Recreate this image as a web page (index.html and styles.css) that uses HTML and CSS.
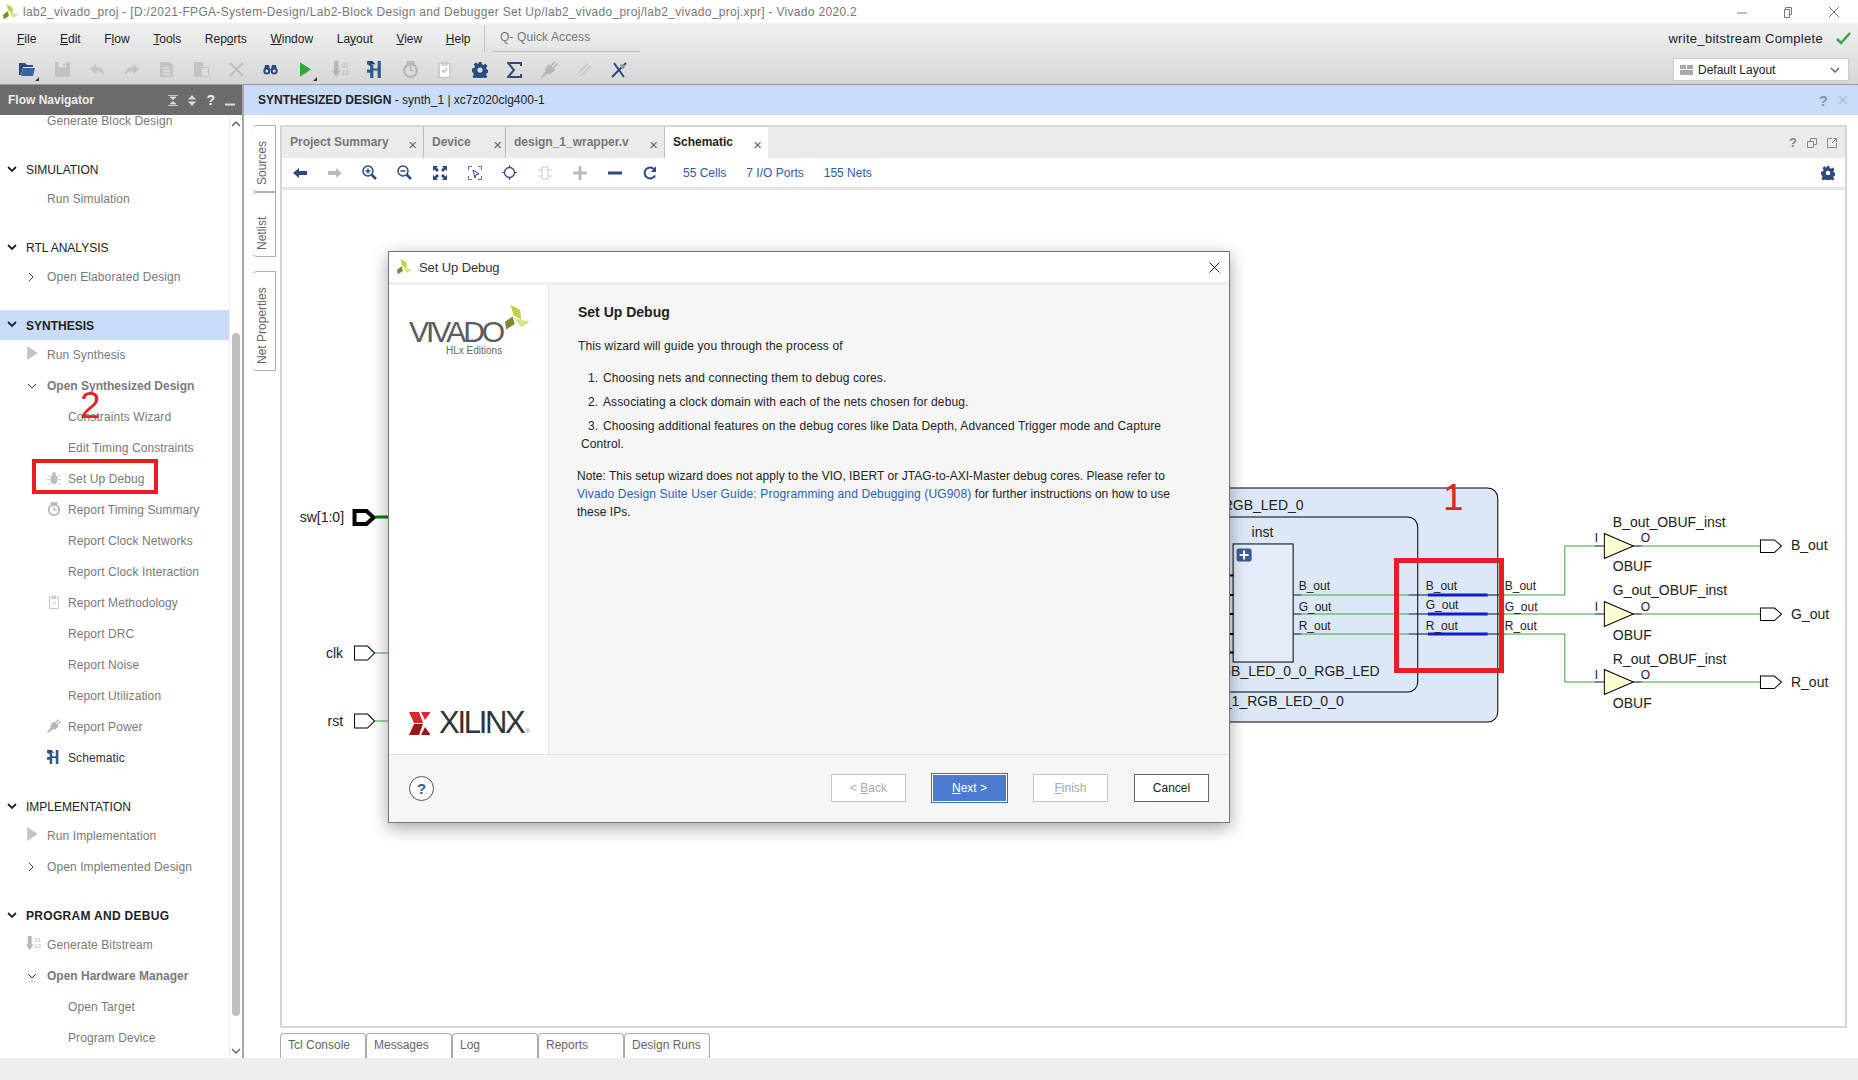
FILE: index.html
```html
<!DOCTYPE html>
<html lang="en">
<head>
  <meta charset="UTF-8" />
  <title>lab2_vivado_proj - Vivado 2020.2</title>
  <link rel="stylesheet" href="styles.css">
</head>
<body>
  <!-- shared icons -->
  <svg class="defs" width="0" height="0">
    <symbol id="i-leaf" viewBox="0 0 24 24">
      <polygon points="5,0 14,5 15,14 8,10" fill="#c3cd4e"/>
      <polygon points="8,12 15,14 23,16 15,21" fill="#dfe388"/>
      <polygon points="0,16 7,11 9,18 1,23" fill="#7d8a2d"/>
    </symbol>
    <symbol id="i-gear" viewBox="0 0 16 16">
      <path fill-rule="evenodd" d="M6.5 0h3l.4 2.3 1.5.7 2-1.3 2 2.2-1.3 2 .6 1.5 2.3.5v3l-2.3.4-.7 1.5 1.3 2-2 2-2-1.3-1.5.6-.4 2.3h-3l-.4-2.3-1.5-.7-2 1.3-2-2 1.3-2-.6-1.5L0 9.6v-3l2.3-.5.7-1.5-1.3-2 2-2.2 2 1.3 1.5-.6zM8 5.5a2.6 2.6 0 100 5.2 2.6 2.6 0 000-5.2z" fill="#2c4a80"/>
    </symbol>
    <symbol id="i-play" viewBox="0 0 12 16"><polygon points="0,0 12,8 0,16"/></symbol>
    <symbol id="i-sch" viewBox="0 0 16 16">
      <path d="M0 0l6 4v3h4V0h3v16h-3V9H6v7H3v-5H0V8h3V5L0 3z" fill="#2c5a8f"/>
      <path d="M0 0h5l3 3H4z" fill="#1f3f70"/>
    </symbol>
    <symbol id="i-clock" viewBox="0 0 16 16">
      <circle cx="8" cy="9" r="6" fill="none" stroke="#b5b5b5" stroke-width="2"/>
      <path d="M5 0h6v2H5zM8 5v4h3" fill="none" stroke="#b5b5b5" stroke-width="1.5"/>
    </symbol>
    <symbol id="i-clip" viewBox="0 0 16 16">
      <path d="M3 2.5h10v13H3zM6 1h4v3H6zM5.500 9l2 2 3-4" fill="#fff" stroke="#bdbdbd"/>
    </symbol>
    <symbol id="i-plug" viewBox="0 0 16 16">
      <path d="M13 0l-4 4-2-1-3 4v3l-4 5 1 1 5-4h3l4-3-1-2 4-4-1-1-4 4-1-1 4-4z" fill="#b5b5b5"/>
    </symbol>
    <symbol id="i-bug" viewBox="0 0 16 16">
      <ellipse cx="8" cy="9.500" rx="4" ry="5.500" fill="#bbb"/>
      <circle cx="8" cy="3" r="2" fill="#bbb"/>
      <path d="M1 4l3 3M15 4l-3 3M0 10h4M16 10h-4M1 16l3-3M15 16l-3-3" stroke="#bbb" fill="none"/>
    </symbol>
  </svg>

  <div class="titlebar">
    <svg class="title-leaf"><use href="#i-leaf"/></svg>
    <span class="title-text">lab2_vivado_proj - [D:/2021-FPGA-System-Design/Lab2-Block Design and Debugger Set Up/lab2_vivado_proj/lab2_vivado_proj.xpr] - Vivado 2020.2</span>
    <div class="win-btns">
      <svg width="12" height="12" viewBox="0 0 12 12"><path d="M1 7h10" stroke="#777"/></svg>
      <svg width="12" height="12" viewBox="0 0 12 12"><path d="M3.500 3.500v-2h6v7h-2M2.500 3.500h5v8h-5z" fill="none" stroke="#777"/></svg>
      <svg width="12" height="12" viewBox="0 0 12 12"><path d="M1 1l10 10M11 1L1 11" stroke="#777"/></svg>
    </div>
  </div>

  <div class="top">
    <div class="menubar">
      <span><u>F</u>ile</span>
      <span><u>E</u>dit</span>
      <span>F<u>l</u>ow</span>
      <span><u>T</u>ools</span>
      <span>Rep<u>o</u>rts</span>
      <span><u>W</u>indow</span>
      <span>La<u>y</u>out</span>
      <span><u>V</u>iew</span>
      <span><u>H</u>elp</span>
      <div class="quick">Q- Quick Access</div>
      <div class="complete">
        <span>write_bitstream Complete</span>
        <svg width="15" height="13" viewBox="0 0 15 13"><path d="M1 7l4 4 9-10" fill="none" stroke="#3aa648" stroke-width="2.500"/></svg>
      </div>
    </div>
    <div class="toolbar">
      <i class="tool more"><svg width="18" height="15" viewBox="0 0 18 15"><path d="M1 1h6l2 2h6v2H5l-2 8H1z" fill="#2c4a80"/><path d="M5 6h12l-2 8H3z" fill="#3c639c"/></svg></i>
      <i class="tool"><svg width="15" height="15" viewBox="0 0 15 15"><path d="M0 0h15v15H0z" fill="#c2c2c2"/><path d="M4 0h7v5H4z" fill="#e4e4e4"/><path d="M8 1h2v3H8z" fill="#c2c2c2"/></svg></i>
      <i class="tool"><svg width="14" height="11" viewBox="0 0 14 11"><path d="M6 0L0 5l6 5V7c3 0 6 1 8 4 0-5-3-8-8-8z" fill="#c4c4c4"/></svg></i>
      <i class="tool"><svg width="14" height="11" viewBox="0 0 14 11"><path d="M8 0l6 5-6 5V7c-3 0-6 1-8 4 0-5 3-8 8-8z" fill="#c4c4c4"/></svg></i>
      <i class="tool"><svg width="13" height="15" viewBox="0 0 13 15"><path d="M0 0h9l4 3v12H0z" fill="#c4c4c4"/><path d="M3 6h7M3 9h7M3 12h7" stroke="#eee"/></svg></i>
      <i class="tool"><svg width="15" height="15" viewBox="0 0 15 15"><path d="M0 0h9v15H0z" fill="#c4c4c4"/><path d="M7.500 5.500h7v9h-7z" fill="#dedede" stroke="#c4c4c4"/></svg></i>
      <i class="tool"><svg width="15" height="15" viewBox="0 0 15 15"><path d="M1 1l13 13M14 1L1 14" stroke="#bdbdbd" stroke-width="2"/></svg></i>
      <i class="tool"><svg width="15" height="11" viewBox="0 0 15 11"><circle cx="3.800" cy="7" r="3.500" fill="#2c4a80"/><circle cx="11.200" cy="7" r="3.500" fill="#2c4a80"/><path d="M2 1h4l1 4h1l1-4h4l1 5H1z" fill="#2c4a80"/><circle cx="3.800" cy="7" r="1.500" fill="#ddd"/><circle cx="11.200" cy="7" r="1.500" fill="#ddd"/></svg></i>
      <i class="tool more"><svg class="play-run" width="11" height="15"><use href="#i-play"/></svg></i>
      <i class="tool"><svg width="17" height="17" viewBox="0 0 16 16"><path d="M2 0h4v9h2l-4 6-4-6h2z" fill="#b5b5b5"/><text x="9" y="6.500" font-size="6" fill="#b5b5b5">01</text><text x="9" y="13" font-size="6" fill="#b5b5b5">10</text></svg></i>
      <i class="tool"><svg width="17" height="17"><use href="#i-sch"/></svg></i>
      <i class="tool"><svg width="17" height="17"><use href="#i-clock"/></svg></i>
      <i class="tool"><svg width="17" height="17"><use href="#i-clip"/></svg></i>
      <i class="tool"><svg width="16" height="16"><use href="#i-gear"/></svg></i>
      <i class="tool"><svg width="15" height="16" viewBox="0 0 15 16"><path d="M14 4V1H1l6 7-6 7h13v-3M3 14" fill="none" stroke="#2c4a80" stroke-width="2"/></svg></i>
      <i class="tool"><svg width="17" height="17"><use href="#i-plug"/></svg></i>
      <i class="tool"><svg width="16" height="16" viewBox="0 0 16 16"><path d="M11 1l4 4-9 9-5 1 1-5z" fill="#ccc"/><path d="M1 15L15 1" stroke="#eee"/></svg></i>
      <i class="tool"><svg width="16" height="16" viewBox="0 0 16 16"><path d="M3 1l10 14M15 1L1 15" stroke="#2c4a80" stroke-width="2"/><path d="M9 2l5 1-1 4-3-1z" fill="#8a97ad"/></svg></i>
      <div class="layout-box">
        <svg width="13" height="10" viewBox="0 0 13 10"><path d="M0 0h6v4H0zM7 0h6v4H7zM0 5h13v5H0z" fill="#aaa"/></svg>
        <span>Default Layout</span>
        <svg class="layout-caret" width="10" height="6" viewBox="0 0 10 6"><path d="M1 1l4 4 4-4" fill="none" stroke="#666" stroke-width="1.500"/></svg>
      </div>
    </div>
  </div>

  <div class="main">
    <div class="nav">
      <div class="nav-title">
        <b>Flow Navigator</b>
        <span class="nav-title-icons">
          <svg width="10" height="11" viewBox="0 0 10 11"><path d="M0 .5h10M0 10.500h10M2 2l3 2.500L8 2zM2 9l3-2.500L8 9z" stroke="#ddd" fill="#ddd" stroke-width=".8"/></svg>
          <svg width="8" height="11" viewBox="0 0 8 11"><path d="M0 4.500L4 0l4 4.500zM0 6.500L4 11l4-4.500z" fill="#ddd"/></svg>
          <em>?</em>
          <svg width="10" height="11" viewBox="0 0 10 11"><path d="M0 9.500h10" stroke="#ddd" stroke-width="2"/></svg>
        </span>
      </div>
      <div class="nav-body">
        <div class="nav-list">
          <div class="nav-group first">
            <div class="item l1">Generate Block Design</div>
          </div>
          <div class="nav-group">
            <div class="head"><svg class="chev"><path d="M1 1l4 4 4-4"/></svg>SIMULATION</div>
            <div class="item l1">Run Simulation</div>
          </div>
          <div class="nav-group">
            <div class="head"><svg class="chev"><path d="M1 1l4 4 4-4"/></svg>RTL ANALYSIS</div>
            <div class="item l1"><svg class="chev thin side"><path d="M2 0l4 4-4 4"/></svg>Open Elaborated Design</div>
          </div>
          <div class="nav-group">
            <div class="head active"><svg class="chev"><path d="M1 1l4 4 4-4"/></svg><b>SYNTHESIS</b></div>
            <div class="item l1"><svg class="play"><use href="#i-play"/></svg>Run Synthesis</div>
            <div class="item l1 strong"><svg class="chev thin side"><path d="M1 2l4 4 4-4"/></svg>Open Synthesized Design</div>
            <div class="item l2">Constraints Wizard</div>
            <div class="item l2">Edit Timing Constraints</div>
            <div class="item l2"><svg class="ico"><use href="#i-bug"/></svg>Set Up Debug</div>
            <div class="item l2"><svg class="ico"><use href="#i-clock"/></svg>Report Timing Summary</div>
            <div class="item l2">Report Clock Networks</div>
            <div class="item l2">Report Clock Interaction</div>
            <div class="item l2"><svg class="ico"><use href="#i-clip"/></svg>Report Methodology</div>
            <div class="item l2">Report DRC</div>
            <div class="item l2">Report Noise</div>
            <div class="item l2">Report Utilization</div>
            <div class="item l2"><svg class="ico"><use href="#i-plug"/></svg>Report Power</div>
            <div class="item l2 on"><svg class="ico"><use href="#i-sch"/></svg>Schematic</div>
          </div>
          <div class="nav-group">
            <div class="head"><svg class="chev"><path d="M1 1l4 4 4-4"/></svg>IMPLEMENTATION</div>
            <div class="item l1"><svg class="play"><use href="#i-play"/></svg>Run Implementation</div>
            <div class="item l1"><svg class="chev thin side"><path d="M2 0l4 4-4 4"/></svg>Open Implemented Design</div>
          </div>
          <div class="nav-group">
            <div class="head"><svg class="chev"><path d="M1 1l4 4 4-4"/></svg><b class="med">PROGRAM AND DEBUG</b></div>
            <div class="item l1"><svg class="bits" viewBox="0 0 16 16"><path d="M2 0h4v9h2l-4 6-4-6h2z" fill="#b5b5b5"/><text x="9" y="6.500" font-size="6" fill="#b5b5b5">01</text><text x="9" y="13" font-size="6" fill="#b5b5b5">10</text></svg>Generate Bitstream</div>
            <div class="item l1 strong"><svg class="chev thin side"><path d="M1 2l4 4 4-4"/></svg>Open Hardware Manager</div>
            <div class="item l2">Open Target</div>
            <div class="item l2">Program Device</div>
          </div>
        </div>
        <div class="scrollbar">
          <svg width="10" height="7" viewBox="0 0 10 7"><path d="M1 6l4-4 4 4" fill="none" stroke="#666" stroke-width="1.500"/></svg>
          <div class="thumb"></div>
          <svg width="10" height="7" viewBox="0 0 10 7"><path d="M1 1l4 4 4-4" fill="none" stroke="#666" stroke-width="1.500"/></svg>
        </div>
      </div>
    </div>

    <div class="content">
      <div class="banner">
        <span><b>SYNTHESIZED DESIGN</b> - synth_1 | xc7z020clg400-1</span>
        <span class="banner-btns"><em>?</em><svg width="10" height="10" viewBox="0 0 10 10"><path d="M1 1l8 8M9 1L1 9" stroke="#b4bdc9" stroke-width="1.500"/></svg></span>
      </div>
      <div class="workspace">
        <div class="vtabs">
          <div class="vtab t-sources">Sources</div>
          <div class="vtab t-netlist">Netlist</div>
          <div class="vtab t-props">Net Properties</div>
        </div>
        <div class="center">
          <div class="panel">
            <div class="tabs">
              <div class="tab w1"><span>Project Summary</span><small>×</small></div>
              <div class="tab w2"><span>Device</span><small>×</small></div>
              <div class="tab w3"><span>design_1_wrapper.v</span><small>×</small></div>
              <div class="tab w4 current"><span>Schematic</span><small>×</small></div>
              <div class="tabs-right">
                <em>?</em>
                <svg width="10" height="10" viewBox="0 0 10 10"><path d="M3.500 3V.5h6v6H7M.5 3.500h6v6h-6z" fill="none" stroke="#888"/></svg>
                <svg width="10" height="10" viewBox="0 0 10 10"><path d="M5 .5H.5v9h9V5M5 5l4-4M6 .5h3.500V4" fill="none" stroke="#888"/></svg>
              </div>
            </div>
            <div class="ptools">
              <i class="ptool"><svg width="14" height="10" viewBox="0 0 14 10"><path d="M0 5l6-5v3h8v4H6v3z" fill="#2c4a80"/></svg></i>
              <i class="ptool"><svg width="14" height="10" viewBox="0 0 14 10"><path d="M14 5L8 0v3H0v4h8v3z" fill="#bdbdbd"/></svg></i>
              <i class="ptool"><svg width="15" height="15" viewBox="0 0 15 15"><circle cx="6" cy="6" r="5" fill="none" stroke="#2c4a80" stroke-width="1.500"/><path d="M9.500 9.500L14 14" stroke="#2c4a80" stroke-width="2.500"/><path d="M3.500 6h5M6 3.500v5" stroke="#2c4a80" stroke-width="1.500"/></svg></i>
              <i class="ptool"><svg width="15" height="15" viewBox="0 0 15 15"><circle cx="6" cy="6" r="5" fill="none" stroke="#2c4a80" stroke-width="1.500"/><path d="M9.500 9.500L14 14" stroke="#2c4a80" stroke-width="2.500"/><path d="M3.500 6h5" stroke="#2c4a80" stroke-width="1.500"/></svg></i>
              <i class="ptool"><svg width="14" height="14" viewBox="0 0 14 14"><path d="M0 0h5L3.500 1.500 6 4 4 6 1.500 3.500 0 5zM14 0v5l-1.500-1.500L10 6 8 4l2.500-2.500L9 0zM0 14V9l1.500 1.500L4 8l2 2-2.500 2.500L5 14zM14 14H9l1.500-1.500L8 10l2-2 2.500 2.500L14 9z" fill="#2c4a80"/></svg></i>
              <i class="ptool"><svg width="14" height="14" viewBox="0 0 14 14"><path d="M.5 4V.5H4M10 .5h3.500V4M13.500 10v3.500H10M4 13.500H.5V10" fill="none" stroke="#5c6f91"/><path d="M5 4l6 4-3 .5L7 12z" fill="#fff" stroke="#2c4a80"/></svg></i>
              <i class="ptool"><svg width="15" height="15" viewBox="0 0 15 15"><circle cx="7.500" cy="7.500" r="5" fill="none" stroke="#2c4a80" stroke-width="1.300"/><path d="M7.500 0v3M7.500 12v3M0 7.500h3M12 7.500h3" stroke="#2c4a80"/></svg></i>
              <i class="ptool"><svg width="14" height="14" viewBox="0 0 14 14"><path d="M4 1h6v12H4zM0 4h4M0 10h4M10 4h4M10 10h4" fill="none" stroke="#ccc"/></svg></i>
              <i class="ptool"><svg width="14" height="14" viewBox="0 0 14 14"><path d="M7 0v14M0 7h14" stroke="#bdbdbd" stroke-width="3"/></svg></i>
              <i class="ptool"><svg width="14" height="14" viewBox="0 0 14 14"><path d="M0 7h14" stroke="#2c4a80" stroke-width="3"/></svg></i>
              <i class="ptool"><svg width="14" height="14" viewBox="0 0 14 14"><path d="M12 9.500A5.500 5.500 0 1111 3" fill="none" stroke="#2c4a80" stroke-width="2"/><path d="M13 0v6H8z" fill="#2c4a80"/></svg></i>
              <a class="count c1">55 Cells</a>
              <a class="count c2">7 I/O Ports</a>
              <a class="count c3">155 Nets</a>
              <svg class="ptools-gear" width="14" height="14"><use href="#i-gear"/></svg>
            </div>
            <div class="canvas">
              <svg class="sch" viewBox="283 192 1562 833">
                <g class="lab">
                  <text x="345" y="523" text-anchor="end">sw[1:0]</text>
                  <text x="344" y="658" text-anchor="end">clk</text>
                  <text x="344" y="726" text-anchor="end">rst</text>
                </g>
                <path d="M355.500 511.500h12l7 6.500-7 6.500h-12z" fill="#fff" stroke="#000" stroke-width="4"/>
                <path d="M376 517.500h32" stroke="#0b7a0b" stroke-width="3"/>
                <path d="M355.500 646.500h13l7 7-7 7h-13zM355.500 714.500h13l7 7-7 7h-13z" fill="#fff" stroke="#000"/>
                <path d="M376 653.500h32M376 721.500h32" stroke="#3aa63a"/>

                <path d="M1100 488.500h388a10 10 0 0 1 10 10v214a10 10 0 0 1-10 10h-388z" fill="#dce8f8" stroke="#000"/>
                <path d="M1100 517.500h308a10 10 0 0 1 10 10v155a10 10 0 0 1-10 10h-308z" fill="#dce8f8" stroke="#000"/>
                <rect x="1233.500" y="544.500" width="60" height="118" fill="#e3edf9" stroke="#000"/>
                <rect x="1237" y="549" width="15" height="13" rx="2" fill="#3c5a92"/>
                <path d="M1244.500 551v9M1240 555.500h9" stroke="#fff" stroke-width="2"/>
                <path d="M1229 576h5M1229 595.500h5M1229 614.500h5M1229 634.500h5M1229 653h5" stroke="#000" stroke-width="2"/>
                <g class="lab">
                  <text x="1304" y="511" text-anchor="end">RGB_LED_0</text>
                  <text x="1252" y="538">inst</text>
                  <text x="1380" y="676" text-anchor="end">RGB_LED_0_0_RGB_LED</text>
                  <text x="1344" y="706" text-anchor="end">design_1_RGB_LED_0_0</text>
                </g>

                <path d="M1302 595.500h107M1505 595.500h60v-49h30M1302 614.500h107M1505 614.500h90M1302 634.500h107M1505 634.500h60v48h30" fill="none" stroke="#3aa63a"/>
                <path d="M1294 595.500h8M1409 595.500h19M1488 595.500h17M1294 614.500h8M1409 614.500h19M1488 614.500h17M1294 634.500h8M1409 634.500h19M1488 634.500h17" stroke="#111"/>
                <path d="M1428 595.500h60M1428 614.500h60M1428 634.500h60" stroke="#0c1fc8" stroke-width="3"/>
                <g class="lab sm">
                  <text x="1299" y="591">B_out</text><text x="1299" y="611">G_out</text><text x="1299" y="630">R_out</text>
                  <text x="1426" y="591">B_out</text><text x="1426" y="610">G_out</text><text x="1426" y="630">R_out</text>
                  <text x="1505" y="591">B_out</text><text x="1505" y="611">G_out</text><text x="1505" y="630">R_out</text>
                </g>

                <g>
                  <path d="M1595 546.500h9M1633 546.500h9" stroke="#111"/>
                  <path d="M1642 546.500h118" stroke="#3aa63a"/>
                  <path d="M1604.500 534l29 12.500-29 12.500z" fill="#fefdd2" stroke="#000"/>
                  <path d="M1760.500 540.500h14l7 6-7 6.500h-14z" fill="#fff" stroke="#000"/>
                </g>
                <g transform="translate(0 68)">
                  <path d="M1595 546.500h9M1633 546.500h9" stroke="#111"/>
                  <path d="M1642 546.500h118" stroke="#3aa63a"/>
                  <path d="M1604.500 534l29 12.500-29 12.500z" fill="#fefdd2" stroke="#000"/>
                  <path d="M1760.500 540.500h14l7 6-7 6.500h-14z" fill="#fff" stroke="#000"/>
                </g>
                <g transform="translate(0 136)">
                  <path d="M1595 546.500h9M1633 546.500h9" stroke="#111"/>
                  <path d="M1642 546.500h118" stroke="#3aa63a"/>
                  <path d="M1604.500 534l29 12.500-29 12.500z" fill="#fefdd2" stroke="#000"/>
                  <path d="M1760.500 540.500h14l7 6-7 6.500h-14z" fill="#fff" stroke="#000"/>
                </g>
                <g class="lab">
                  <text x="1613" y="528">B_out_OBUF_inst</text><text x="1595" y="543" class="pin">I</text><text x="1641" y="543" class="pin">O</text><text x="1613" y="572">OBUF</text><text x="1791" y="551">B_out</text>
                  <text x="1613" y="596">G_out_OBUF_inst</text><text x="1595" y="611" class="pin">I</text><text x="1641" y="611" class="pin">O</text><text x="1613" y="640">OBUF</text><text x="1791" y="619">G_out</text>
                  <text x="1613" y="664">R_out_OBUF_inst</text><text x="1595" y="679" class="pin">I</text><text x="1641" y="679" class="pin">O</text><text x="1613" y="708">OBUF</text><text x="1791" y="687">R_out</text>
                </g>
              </svg>
            </div>
          </div>
          <div class="bottom-tabs">
            <div class="btab b1">Tcl Console</div>
            <div class="btab b2">Messages</div>
            <div class="btab b3">Log</div>
            <div class="btab b4">Reports</div>
            <div class="btab b5">Design Runs</div>
          </div>
        </div>
      </div>
    </div>
  </div>
  <div class="statusbar"></div>

  <!-- wizard on top of the schematic -->
  <div class="dialog">
    <div class="dlg-title">
      <svg width="16" height="16"><use href="#i-leaf"/></svg>
      <span>Set Up Debug</span>
      <svg class="dlg-close" width="11" height="11" viewBox="0 0 11 11"><path d="M.5.5l10 10M10.500.5l-10 10" stroke="#222"/></svg>
    </div>
    <div class="dlg-body">
      <div class="dlg-side">
        <div class="vivado">
          <div class="vivado-word"><span>VIVADO</span><svg width="26" height="27"><use href="#i-leaf"/></svg></div>
          <div class="vivado-sub">HLx Editions</div>
        </div>
        <div class="xilinx">
          <svg width="21" height="23" viewBox="0 0 21 23">
            <path d="M0 0h10l4 11H5z" fill="#d8262c"/><path d="M5 12h9L10 23H0z" fill="#96191c"/>
            <path d="M12 0h9v1l-5 7z" fill="#d8262c"/><path d="M16 15l5 7v1h-9z" fill="#96191c"/>
          </svg>
          <span>XILINX<sup>®</sup></span>
        </div>
      </div>
      <div class="dlg-main">
        <h2>Set Up Debug</h2>
        <p class="intro">This wizard will guide you through the process of</p>
        <p class="step"><span>1.</span>Choosing nets and connecting them to debug cores.</p>
        <p class="step"><span>2.</span>Associating a clock domain with each of the nets chosen for debug.</p>
        <p class="step"><span>3.</span>Choosing additional features on the debug cores like Data Depth, Advanced Trigger mode and Capture Control.</p>
        <p class="note">Note: This setup wizard does not apply to the VIO, IBERT or JTAG-to-AXI-Master debug cores. Please refer to <a>Vivado Design Suite User Guide: Programming and Debugging (UG908)</a> for further instructions on how to use these IPs.</p>
      </div>
    </div>
    <div class="dlg-foot">
      <div class="help">?</div>
      <div class="btn off"><span>&lt; <u>B</u>ack</span></div>
      <div class="btn next"><span><u>N</u>ext &gt;</span></div>
      <div class="btn off"><span><u>F</u>inish</span></div>
      <div class="btn cancel">Cancel</div>
    </div>
  </div>

  <!-- hand drawn annotations from the screenshot author -->
  <div class="mark mark-debug"></div>
  <div class="mark mark-ports"></div>
  <span class="num num-1">1</span>
  <span class="num num-2">2</span>
</body>
</html>
```

FILE: styles.css
```css
* {
  margin: 0;
  padding: 0;
  box-sizing: border-box;
}

html, body {
  width: 1858px;
  height: 1080px;
  overflow: hidden;
}

body {
  position: relative;
  font: 12px 'Liberation Sans', Arial, sans-serif;
  color: #222;
  background: #fff;
  display: flex;
  flex-direction: column;
}

.defs {
  position: absolute;
}

em {
  font-style: normal;
  font-weight: 700;
}

/* title bar */
.titlebar {
  height: 23px;
  display: flex;
  align-items: center;
  padding-left: 3px;
  color: #777;
}

.title-text {
  letter-spacing: .31px;
}

.title-leaf {
  width: 16px;
  height: 16px;
  margin-right: 4px;
}

.win-btns {
  margin-left: auto;
  display: flex;
  gap: 34px;
  padding-right: 18px;
}

/* menu + main toolbar */
.top {
  height: 62px;
  background: linear-gradient(#f1f1f1, #d6d6d6);
  border-bottom: 1px solid #9a9a9a;
}

.menubar {
  height: 31px;
  display: flex;
  align-items: center;
  gap: 23.6px;
  padding: 0 7px 0 17px;
  color: #222;
}

.quick {
  width: 147px;
  height: 27px;
  padding: 4px 0 0 7px;
  border-bottom: 1px solid #bbb;
  color: #777;
  line-height: 17px;
  letter-spacing: .1px;
  position: relative;
  left: -1px;
}

.quick::before {
  content: "";
  position: absolute;
  left: -9px;
  top: 0;
  height: 27px;
  border-left: 1px solid #c4c4c4;
}

.complete {
  margin-left: auto;
  display: flex;
  align-items: center;
  gap: 13px;
  font-size: 13px;
  letter-spacing: .3px;
}

.toolbar {
  height: 30px;
  display: flex;
  align-items: center;
  padding: 1px 9px 0 10px;
}

.tool {
  width: 34.8px;
  height: 24px;
  display: flex;
  align-items: center;
  justify-content: center;
  position: relative;
}

/* little drop-down corner */
.tool.more::after {
  content: "";
  position: absolute;
  right: 6px;
  bottom: 1px;
  border-left: 4px solid transparent;
  border-bottom: 4px solid #333;
}

.play-run {
  fill: #2ea836;
}

.layout-box {
  margin-left: auto;
  width: 176px;
  height: 23px;
  background: #fff;
  border: 1px solid #ccc;
  display: flex;
  align-items: center;
  gap: 5px;
  padding: 0 8px 0 6px;
}

.layout-caret {
  margin-left: auto;
}

/* main area */
.main {
  flex: 1;
  display: flex;
  min-height: 0;
}

.nav {
  width: 244px;
  display: flex;
  flex-direction: column;
  border-right: 2px solid #a8a8a8;
}

.nav-title {
  height: 30px;
  flex: none;
  background: #6b6b6b;
  color: #eee;
  display: flex;
  align-items: center;
  justify-content: space-between;
  padding: 0 7px 0 8px;
}

.nav-title-icons {
  display: flex;
  align-items: center;
  gap: 10px;
  font-size: 14px;
}

.nav-body {
  flex: 1;
  display: flex;
  min-height: 0;
}

.nav-list {
  width: 229px;
  overflow: hidden;
}

.nav-group {
  margin-top: 20px;
}

.nav-group.first {
  margin-top: -9.5px;
}

.head {
  height: 27px;
  display: flex;
  align-items: center;
  padding-left: 26px;
  position: relative;
  color: #222;
}

.head.active {
  background: #c9dcfa;
  height: 30px;
  margin: -3px 0 -0.5px;
  padding-top: 3px;
}

.head .med {
  letter-spacing: .3px;
}

.chev {
  position: absolute;
  left: 7px;
  top: 50%;
  width: 10px;
  height: 7px;
  margin-top: -4px;
  fill: none;
  stroke: #222;
  stroke-width: 1.8;
}

.chev.thin {
  stroke-width: 1;
  stroke: #333;
  height: 8px;
}

.chev.side {
  left: 27px;
}

.item {
  height: 31px;
  display: flex;
  align-items: center;
  position: relative;
  color: #7a7a7a;
  letter-spacing: .1px;
}

.item.l1 {
  padding-left: 47px;
}

.item.l2 {
  padding-left: 68px;
}

.item.strong {
  font-weight: 700;
  letter-spacing: 0;
}

.item.on {
  color: #333;
}

.play {
  position: absolute;
  left: 27px;
  top: 7px;
  width: 11px;
  height: 14px;
  fill: #c4c4c4;
}

.bits {
  position: absolute;
  left: 26px;
  top: 7px;
  width: 15px;
  height: 15px;
}

.ico {
  position: absolute;
  left: 47px;
  top: 8px;
  width: 14px;
  height: 14px;
}

.scrollbar {
  flex: 1;
  display: flex;
  flex-direction: column;
  align-items: center;
  padding: 5px 0 3px;
  border-left: 1px solid #eee;
}

.thumb {
  width: 8px;
  flex: 1;
  margin: 206px 0 32px;
  background: #bfbfbf;
  border-radius: 4px;
}

.content {
  flex: 1;
  display: flex;
  flex-direction: column;
  min-width: 0;
}

.banner {
  height: 30px;
  flex: none;
  background: #c9dcfa;
  display: flex;
  align-items: center;
  justify-content: space-between;
  padding: 0 10px 0 14px;
}

.banner-btns {
  display: flex;
  align-items: center;
  gap: 10px;
  font-size: 15px;
  color: #8793a3;
}

.workspace {
  flex: 1;
  display: flex;
  min-height: 0;
  padding: 10px 11px 0 8px;
}

/* rotated side tabs */
.vtabs {
  width: 24px;
  margin-right: 4px;
  flex: none;
}

.vtab {
  writing-mode: vertical-rl;
  transform: rotate(180deg);
  display: flex;
  align-items: center;
  justify-content: flex-start;
  padding: 6px 0 0 3px;
  border: 1px solid #b0b0b0;
  border-right: none;
  border-radius: 0 5px 5px 0;
  color: #666;
  width: 24px;
}

.t-sources { height: 67px; }
.t-netlist { height: 65px; }
.t-props { height: 100px; margin-top: 14px; }

.center {
  flex: 1;
  display: flex;
  flex-direction: column;
  min-width: 0;
}

.panel {
  flex: 1;
  display: flex;
  flex-direction: column;
  min-height: 0;
  border: 2px solid #d6d6d6;
}

.tabs {
  height: 31px;
  flex: none;
  background: #ebebeb;
  display: flex;
}

.tab {
  display: flex;
  align-items: center;
  justify-content: space-between;
  padding: 0 6px 2px 8px;
  color: #777;
  font-weight: 700;
  border-right: 1px solid #bbb;
}

.tab small {
  font-size: 15px;
  font-weight: 400;
  padding-top: 5px;
  color: #666;
}

.w1 { width: 142px; }
.w2 { width: 82px; padding-right: 3px; }
.w3 { width: 159px; }
.w4 { width: 103px; }

.tab.current {
  background: #fff;
  color: #222;
  border-right: none;
}

.tabs-right {
  margin-left: auto;
  display: flex;
  align-items: center;
  gap: 10px;
  padding-right: 8px;
  color: #888;
  font-size: 13px;
}

.ptools {
  height: 32px;
  flex: none;
  display: flex;
  align-items: center;
  padding: 0 10px 0 0;
  border-bottom: 3px solid #e6e6e6;
}

.ptool {
  width: 35px;
  height: 20px;
  display: flex;
  align-items: center;
  justify-content: center;
}

.count {
  color: #2b5cab;
}

.c1 { margin-left: 16px; }
.c2 { margin-left: 20px; }
.c3 { margin-left: 20px; }

.ptools-gear {
  margin-left: auto;
}

.canvas {
  flex: 1;
  min-height: 0;
  background: #fff;
}

.sch {
  display: block;
  width: 100%;
  height: 100%;
}

.lab text {
  font: 14px 'Liberation Sans', Arial, sans-serif;
  fill: #222;
}

.lab.sm text {
  font-size: 12px;
}

.lab text.pin {
  font-size: 12px;
}

.bottom-tabs {
  height: 30px;
  flex: none;
  display: flex;
  padding-top: 5px;
}

.btab {
  width: 86px;
  border: 1px solid #aaa;
  border-bottom: none;
  border-radius: 4px 4px 0 0;
  padding: 4px 0 0 7px;
  color: #666;
}

.statusbar {
  height: 22px;
  flex: none;
  background: #eee;
}

/* wizard dialog */
.dialog {
  position: absolute;
  left: 388px;
  top: 251px;
  width: 842px;
  height: 572px;
  background: #f6f6f6;
  border: 1px solid #777;
  box-shadow: 0 5px 16px rgba(0, 0, 0, .35);
  display: flex;
  flex-direction: column;
}

.dlg-title {
  height: 33px;
  flex: none;
  background: #fff;
  display: flex;
  align-items: center;
  gap: 6px;
  padding: 0 9px 0 8px;
  font-size: 13px;
  letter-spacing: -.1px;
  color: #333;
  border-bottom: 3px solid #eee;
}

.dlg-close {
  margin-left: auto;
}

.dlg-body {
  flex: 1;
  display: flex;
  min-height: 0;
  border-bottom: 1px solid #e4e4e4;
}

.dlg-side {
  width: 160px;
  flex: none;
  background: #fff;
  border-right: 1px solid #e8e8e8;
  display: flex;
  flex-direction: column;
  justify-content: space-between;
  padding: 20px 0 18px 20px;
}

.vivado-word {
  display: flex;
  align-items: flex-start;
  font-size: 30px;
  line-height: 34px;
  letter-spacing: -3px;
  color: #5a5b5d;
  height: 34px;
  padding-top: 10px;
}

.vivado-word svg {
  margin: -11px 0 0 3px;
  flex: none;
}

.vivado-sub {
  margin: 6px 0 0 37px;
  font-size: 10px;
  color: #666;
}

.xilinx {
  display: flex;
  align-items: center;
  gap: 9px;
}

.xilinx span {
  font-size: 31px;
  line-height: 26px;
  letter-spacing: -2.3px;
  color: #333;
}

.xilinx sup {
  font-size: 6px;
  line-height: 0;
  letter-spacing: 0;
  color: #777;
  vertical-align: baseline;
  margin-left: 2px;
}

.dlg-main {
  flex: 1;
  padding: 19px 0 0 29px;
  color: #222;
}

.dlg-main h2 {
  font-size: 14px;
  line-height: 17px;
  margin-bottom: 16px;
}

.intro {
  line-height: 18px;
  margin-bottom: 14px;
  letter-spacing: .12px;
}

.step {
  width: 620px;
  line-height: 18px;
  margin-bottom: 6px;
  padding-left: 3px;
  letter-spacing: .12px;
}

.step span {
  display: inline-block;
  width: 22px;
  padding-left: 7px;
}

.note {
  width: 604px;
  line-height: 18px;
  margin-top: 14px;
  margin-left: -1px;
  letter-spacing: .03px;
}

.note a {
  color: #2a5fc0;
  letter-spacing: .15px;
}

.dlg-foot {
  height: 67px;
  flex: none;
  display: flex;
  align-items: center;
  padding: 0 20px 1px 20px;
}

.help {
  width: 25px;
  height: 25px;
  border: 1px solid #555;
  border-radius: 50%;
  background: #fff;
  color: #3c5a92;
  font: 700 15px/23px 'Liberation Sans', sans-serif;
  text-align: center;
  margin-right: auto;
}

.btn {
  width: 75px;
  height: 28px;
  margin-left: 26px;
  background: #fff;
  border: 1px solid #666;
  display: flex;
  align-items: center;
  justify-content: center;
}

.btn.off {
  border-color: #c4c4c4;
  color: #aaa;
}

.btn.next {
  background: #4d7bd0;
  color: #fff;
  border: 1px solid #fff;
  outline: 1px solid #3f6bbd;
}

/* red annotations */
.mark {
  position: absolute;
  border: 4px solid #ed1c24;
}

.mark-debug {
  left: 32px;
  top: 459px;
  width: 126px;
  height: 35px;
}

.mark-ports {
  left: 1394px;
  top: 558px;
  width: 110px;
  height: 115px;
  border-width: 5px;
}

.num {
  position: absolute;
  color: #e0242b;
  font: 37px/37px 'Liberation Sans', sans-serif;
}

.num-1 {
  left: 1443px;
  top: 479px;
}

.num-2 {
  left: 80px;
  top: 387px;
}
```
